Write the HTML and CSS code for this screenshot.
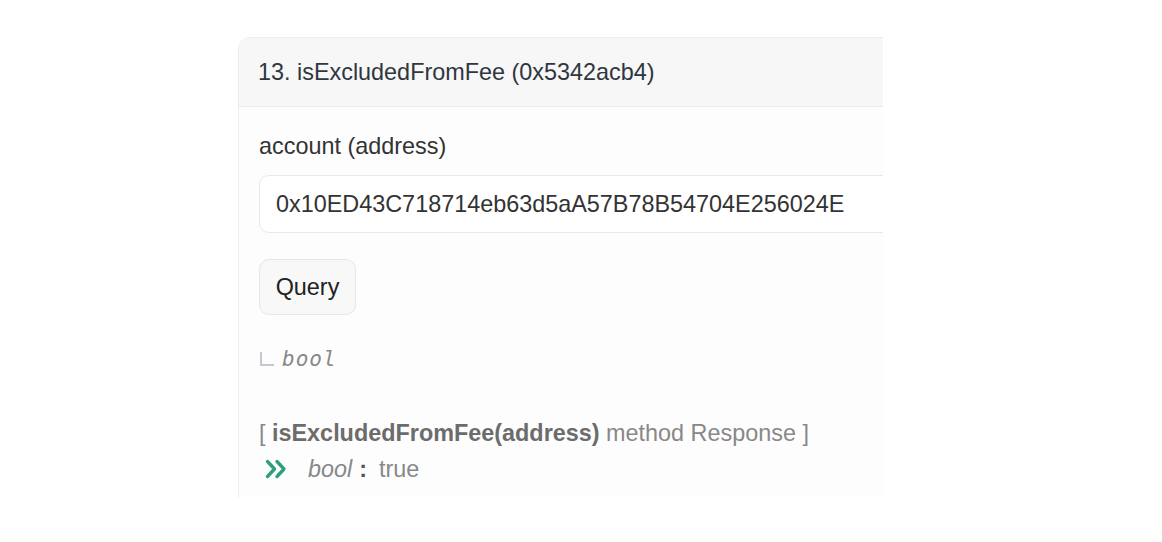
FILE: index.html
```html
<!DOCTYPE html>
<html>
<head>
<meta charset="utf-8">
<link rel="stylesheet" href="styles.css">
</head>
<body>
<div class="clip">
  <div class="card">
    <div class="card-header">13. isExcludedFromFee (0x5342acb4)</div>
    <div class="card-body">
      <div class="field-label">account (address)</div>
      <div class="input">0x10ED43C718714eb63d5aA57B78B54704E256024E</div>
      <button class="btn">Query</button>
      <div class="ret"><span class="ret-corner"></span><span class="ret-type">bool</span></div>
      <div class="resp-title">[ <b>isExcludedFromFee(address)</b> method Response ]</div>
      <div class="resp-row">
        <svg class="chev" width="22" height="20" viewBox="0 0 22 20"><path d="M2.5 2.5 L9.5 10 L2.5 17.5 M12 2.5 L19 10 L12 17.5" fill="none" stroke="#2f9e7e" stroke-width="3.3" stroke-linecap="round" stroke-linejoin="round"/></svg>
        <span class="resp-type">bool</span><span class="resp-colon">:</span><span class="resp-val">true</span>
      </div>
    </div>
  </div>
</div>
</body>
</html>
```

FILE: styles.css
```css
* { box-sizing: border-box; }
html, body { margin: 0; padding: 0; background: #fff; }
body { font-family: "Liberation Sans", Arial, sans-serif; }
.clip {
  margin: 37px 0 0 238px;
  width: 645px;
  height: 460px;
  overflow: hidden;
}
.card {
  width: 900px;
  height: 520px;
  border: 1px solid #ececec;
  border-radius: 12px;
  background: #fdfdfd;
}
.card-header {
  height: 69px;
  background: #f7f7f7;
  border-bottom: 1px solid #ebebeb;
  border-radius: 12px 12px 0 0;
  padding: 0 0 0 19px;
  display: flex;
  align-items: center;
  font-size: 23.4px;
  color: #2f3640;
}
.card-body { padding: 26px 0 0 20px; }
.field-label { font-size: 23.4px; color: #333; line-height: 26px; }
.input {
  margin-top: 16px;
  height: 58px;
  border: 1px solid #e8e8e8;
  border-radius: 10px;
  background: #fff;
  padding: 0 0 0 16px;
  display: flex;
  align-items: center;
  font-size: 23.4px;
  color: #333;
}
.btn {
  margin-top: 26px;
  height: 56px;
  width: 97px;
  border: 1px solid #e6e6e6;
  border-radius: 10px;
  background: #f8f8f8;
  font-family: inherit;
  font-size: 23.4px;
  color: #222;
  padding: 0;
  display: block;
}
.ret { margin-top: 30px; display: flex; align-items: flex-end; height: 26px; }
.ret-corner {
  width: 14px; height: 14px;
  border-left: 2px solid #c4c8d0;
  border-bottom: 2px solid #c4c8d0;
  margin: 0 8px 5px 1px;
}
.ret-type { font-family: "DejaVu Sans Mono", monospace; font-style: italic; font-size: 21px; color: #888; letter-spacing: 1px; }
.resp-title { margin-top: 48px; font-size: 23.4px; line-height: 28px; color: #888; }
.resp-title b { color: #6c6c6c; }
.resp-row { margin-top: 8px; display: flex; align-items: center; font-size: 23.4px; line-height: 28px; color: #888; }
.chev { margin-left: 6px; margin-right: 21px; }
.resp-type { font-style: italic; }
.resp-colon { margin: 0 12px 0 7px; color: #555; font-weight: bold; }
```
